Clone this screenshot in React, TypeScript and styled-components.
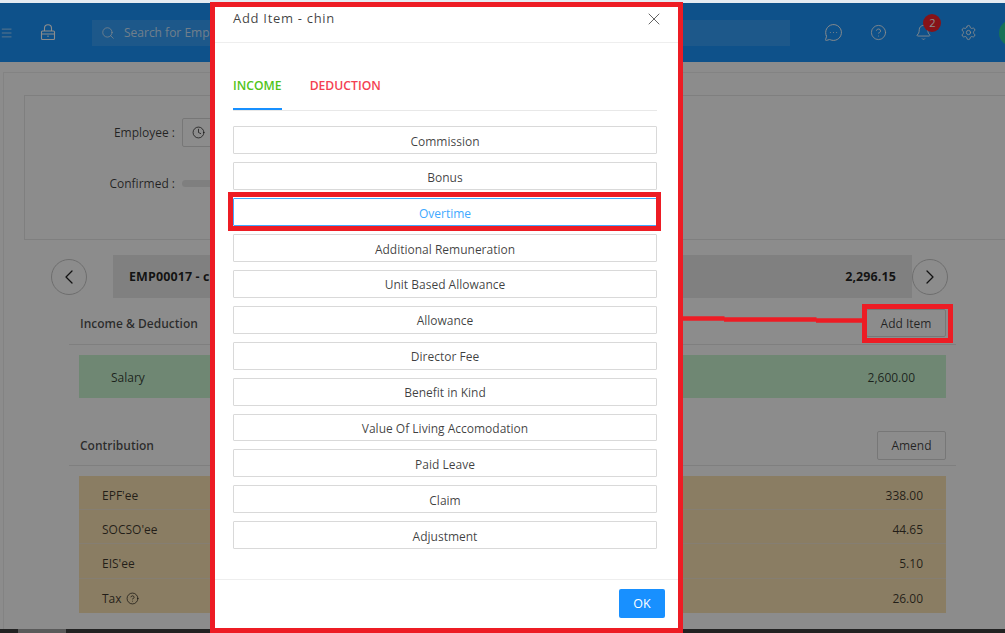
import styled, { createGlobalStyle } from "styled-components";
import {
  Bell,
  ChevronLeft,
  ChevronRight,
  CircleHelp,
  Clock,
  Menu,
  MessageCircleMore,
  Search,
  Settings,
  X,
} from "lucide-react";

const items = [
  "Commission",
  "Bonus",
  "Overtime",
  "Additional Remuneration",
  "Unit Based Allowance",
  "Allowance",
  "Director Fee",
  "Benefit in Kind",
  "Value Of Living Accomodation",
  "Paid Leave",
  "Claim",
  "Adjustment",
];

const contributions = [
  { name: "EPF'ee", value: "338.00" },
  { name: "SOCSO'ee", value: "44.65" },
  { name: "EIS'ee", value: "5.10" },
  { name: "Tax", value: "26.00", help: true },
];

function LockIcon() {
  return (
    <svg width="16" height="17" viewBox="0 0 16 17" fill="none" stroke="currentColor" strokeWidth="1.1">
      <path d="M4.5 7V4.2a3.5 3.5 0 0 1 7 0V7" />
      <rect x="1.5" y="7" width="13" height="8.5" rx="1" />
      <path d="M1.5 10h13M8 11.5v1.5" />
    </svg>
  );
}

function App() {
  return (
    <>
      <GlobalStyle />
      <TopStrip />
      <Stage>
        <Header>
          <MenuSlot>
            <Menu size={20} strokeWidth={1.1} />
          </MenuSlot>
          <LockSlot>
            <LockIcon />
          </LockSlot>
          <SearchBox>
            <Search size={14} strokeWidth={1.5} />
            Search for Employee
          </SearchBox>
          <HeaderIcon>
            <MessageCircleMore size={19} strokeWidth={1.2} />
          </HeaderIcon>
          <HeaderIcon>
            <CircleHelp size={17} strokeWidth={1.2} />
          </HeaderIcon>
          <HeaderIcon>
            <Bell size={17} strokeWidth={1.2} />
            <Badge>2</Badge>
          </HeaderIcon>
          <HeaderIcon>
            <Settings size={17} strokeWidth={1.2} />
          </HeaderIcon>
          <Avatar />
        </Header>

        <Card>
          <FilterPanel>
            <FilterRow>
              <FilterLabel>Employee :</FilterLabel>
              <SelectBox>
                <Clock size={13} strokeWidth={1.6} />
              </SelectBox>
            </FilterRow>
            <FilterRow>
              <FilterLabel>Confirmed :</FilterLabel>
              <ProgressTrack />
            </FilterRow>
          </FilterPanel>

          <NavRow>
            <NavButton>
              <ChevronLeft size={24} strokeWidth={1.3} />
            </NavButton>
            <NavBar>
              <span>EMP00017 - chin</span>
              <span>2,296.15</span>
            </NavBar>
            <NavButton>
              <ChevronRight size={24} strokeWidth={1.3} />
            </NavButton>
          </NavRow>

          <SectionHead>
            <SectionTitle>Income &amp; Deduction</SectionTitle>
            <GhostButton>Add Item</GhostButton>
          </SectionHead>
          <SalaryRow>
            <span>Salary</span>
            <span>2,600.00</span>
          </SalaryRow>

          <SectionHead $spaced>
            <SectionTitle>Contribution</SectionTitle>
            <AmendButton>Amend</AmendButton>
          </SectionHead>
          <ContributionTable>
            {contributions.map((row) => (
              <ContributionRow key={row.name}>
                <RowName>
                  {row.name}
                  {row.help && <CircleHelp size={13} strokeWidth={1.5} />}
                </RowName>
                <span>{row.value}</span>
              </ContributionRow>
            ))}
          </ContributionTable>
        </Card>

        <Backdrop />
      </Stage>
      <BottomBar>
        <ScrollThumb />
      </BottomBar>

      <AddItemFrame />
      <Connector width="190" height="12" viewBox="0 0 190 12" fill="none" stroke="#ed1c24" strokeWidth="4.5">
        <path d="M0 4.5h48.5M48 5.5h92.5M140 6.5h46" />
      </Connector>

      <Modal>
        <ModalHeader>
          <ModalTitle>Add Item - chin</ModalTitle>
          <CloseButton>
            <X size={20} strokeWidth={1.1} />
          </CloseButton>
        </ModalHeader>
        <ModalBody>
          <Tabs>
            <Tab $color="#52c41a" $active>
              INCOME
            </Tab>
            <Tab $color="#f43f52">DEDUCTION</Tab>
          </Tabs>
          <ItemList>
            {items.map((item) => (
              <ItemButton key={item} $selected={item === "Overtime"}>
                {item}
              </ItemButton>
            ))}
          </ItemList>
        </ModalBody>
        <ModalFooter>
          <OkButton>OK</OkButton>
        </ModalFooter>
      </Modal>
    </>
  );
}

export default App;

const GlobalStyle = createGlobalStyle`
  html, body {
    margin: 0;
    height: 633px;
    overflow: hidden;
    background: #fff;
    font-family: "Open Sans", "Noto Sans", sans-serif;
    font-size: 12px;
    color: rgba(0, 0, 0, 0.75);
  }
  * { box-sizing: border-box; }
`;

const TopStrip = styled.div`
  height: 3px;
  background: #e4ebf2;
`;

const Stage = styled.div`
  position: relative;
  height: 626px;
  overflow: hidden;
  background: #fff;
`;

const Backdrop = styled.div`
  position: absolute;
  top: 0;
  left: 0;
  z-index: 3;
  width: 100%;
  height: 100%;
  background-color: rgba(0, 0, 0, 0.45);
`;

const BottomBar = styled.div`
  height: 4px;
  background: #222;
  padding-left: 18px;
`;

const ScrollThumb = styled.div`
  width: 48px;
  height: 4px;
  background: #5a5a5a;
`;

const Header = styled.header`
  display: flex;
  align-items: center;
  height: 59px;
  background: #1a94fc;
  color: #fff;
  overflow: hidden;
`;

const MenuSlot = styled.div`
  display: flex;
  flex: none;
  width: 13.3px;
  justify-content: flex-end;
`;

const LockSlot = styled.div`
  display: flex;
  flex: none;
  margin-left: 27px;
  width: 16px;
`;

const SearchBox = styled.div`
  display: flex;
  flex: none;
  align-items: center;
  gap: 9px;
  margin: 0 21.5px 0 35.7px;
  padding-left: 9px;
  width: 698px;
  height: 26px;
  background: rgba(255, 255, 255, 0.12);
  color: rgba(255, 255, 255, 0.75);
`;

const HeaderIcon = styled.div`
  position: relative;
  display: flex;
  flex: none;
  justify-content: center;
  width: 45px;
`;

const Badge = styled.span`
  position: absolute;
  top: -10px;
  left: 22px;
  width: 18px;
  height: 18px;
  border-radius: 50%;
  background: #f5222d;
  font-size: 11px;
  line-height: 18px;
  text-align: center;
`;

const Avatar = styled.div`
  flex: none;
  margin-left: 7.5px;
  width: 26px;
  height: 26px;
  border-radius: 50%;
  background: #2bcf9f;
`;

const Card = styled.div`
  margin: 10px -10px 0 3px;
  padding: 22px 0 0 20px;
  height: 570px;
  border: 1px solid #eee;
`;

const FilterPanel = styled.div`
  display: flex;
  flex-direction: column;
  gap: 22px;
  padding-top: 22px;
  height: 145px;
  border: 1px solid #e8e8e8;
  border-right-width: 0;
`;

const FilterRow = styled.div`
  display: flex;
  align-items: center;
  gap: 7px;
  height: 29px;
`;

const FilterLabel = styled.div`
  width: 150px;
  text-align: right;
`;

const SelectBox = styled.div`
  display: flex;
  align-items: center;
  padding-left: 9px;
  width: 200px;
  height: 29px;
  border: 1px solid #d9d9d9;
  border-radius: 2px;
`;

const ProgressTrack = styled.div`
  width: 200px;
  height: 7px;
  border-radius: 4px;
  background: #e8e8e8;
`;

const NavRow = styled.div`
  display: flex;
  align-items: center;
  margin: 15px 0 0 27px;
`;

const NavButton = styled.div`
  display: flex;
  flex: none;
  align-items: center;
  justify-content: center;
  width: 36px;
  height: 36px;
  border: 1px solid #c8c8c8;
  border-radius: 50%;
  background: #fff;
  color: #222;
`;

const NavBar = styled.div`
  display: flex;
  flex: none;
  align-items: center;
  justify-content: space-between;
  margin-left: 26px;
  padding: 0 16px;
  width: 799px;
  height: 43px;
  background: #e9e9e9;
  font-size: 12.5px;
  font-weight: 700;
  letter-spacing: 0.1px;
  color: rgba(0, 0, 0, 0.85);
`;

const SectionHead = styled.div<{ $spaced?: boolean }>`
  display: flex;
  align-items: center;
  justify-content: space-between;
  margin: ${(p) => (p.$spaced ? "27px" : "6px")} 0 0 45px;
  padding: 0 10px ${(p) => (p.$spaced ? "0" : "2px")} 11px;
  width: 887px;
  height: 41px;
  border-bottom: 1px solid #e8e8e8;
`;

const SectionTitle = styled.div`
  font-weight: 600;
  color: rgba(0, 0, 0, 0.7);
`;

const GhostButton = styled.div`
  display: flex;
  align-items: center;
  justify-content: center;
  width: 80px;
  height: 28px;
  border: 1px solid #d9d9d9;
  border-radius: 2px;
  background: #fff;
`;

const AmendButton = styled(GhostButton)`
  width: 69px;
  height: 29px;
`;

const SalaryRow = styled.div`
  display: flex;
  align-items: center;
  justify-content: space-between;
  margin: 10px 0 0 55px;
  padding: 2px 31px 0 32px;
  width: 867px;
  height: 43px;
  background: #cbf6d2;
`;

const ContributionTable = styled.div`
  margin: 10px 0 0 55px;
  width: 867px;
  background: #fbe3b4;
`;

const ContributionRow = styled.div`
  display: flex;
  align-items: center;
  justify-content: space-between;
  padding: 5px 23px 0;
  height: 34.2px;
  border-bottom: 1px solid #f2e6cf;

  &:last-child {
    border-bottom: 0;
  }
`;

const RowName = styled.span`
  display: inline-flex;
  align-items: center;
  gap: 4px;
`;

const AddItemFrame = styled.div`
  position: absolute;
  top: 304px;
  left: 862px;
  z-index: 4;
  width: 91px;
  height: 39px;
  border: 5px solid #ed1c24;
`;

const Connector = styled.svg`
  position: absolute;
  top: 314px;
  left: 676px;
  z-index: 4;
`;

const Modal = styled.div`
  position: absolute;
  top: 2px;
  left: 210px;
  z-index: 6;
  display: flex;
  flex-direction: column;
  width: 473px;
  height: 631px;
  border: 5px solid #ed1c24;
  background: #fff;
`;

const ModalHeader = styled.div`
  display: flex;
  flex: none;
  align-items: center;
  justify-content: space-between;
  padding: 0 14px 12px 18px;
  height: 36px;
  border-bottom: 1px solid #eee;
`;

const ModalTitle = styled.div`
  padding-bottom: 2px;
  font-size: 13px;
  font-weight: 500;
  letter-spacing: 0.7px;
  color: rgba(0, 0, 0, 0.75);
`;

const CloseButton = styled.div`
  display: flex;
  color: #555;
`;

const ModalBody = styled.div`
  flex: 1;
  padding: 0 21px 0 18px;
`;

const Tabs = styled.div`
  display: flex;
  gap: 28px;
  padding-top: 31px;
  height: 68px;
  border-bottom: 1px solid #e8e8e8;
`;

const Tab = styled.div<{ $color: string; $active?: boolean }>`
  height: 36px;
  padding-top: 4px;
  line-height: 16px;
  font-size: 12.2px;
  font-weight: 600;
  color: ${(p) => p.$color};
  ${(p) => p.$active && "box-shadow: inset 0 -2px 0 #1890ff;"}
`;

const ItemList = styled.div`
  display: flex;
  flex-direction: column;
  gap: 8px;
  margin-top: 15.4px;
`;

const ItemButton = styled.div<{ $selected?: boolean }>`
  position: relative;
  display: flex;
  flex: none;
  align-items: center;
  justify-content: center;
  padding-top: 2px;
  height: 27.9px;
  border: 1px solid #d9d9d9;
  border-radius: 1px;
  background: #fff;
  color: rgba(0, 0, 0, 0.75);

  ${(p) =>
    p.$selected &&
    `
    border-color: #40a9ff;
    color: #40a9ff;

    &::after {
      content: "";
      position: absolute;
      top: -7px;
      right: -5px;
      bottom: -6px;
      left: -6px;
      border: 5px solid #ed1c24;
    }
  `}
`;

const ModalFooter = styled.div`
  display: flex;
  flex: none;
  justify-content: flex-end;
  padding: 9px 13px 0 0;
  height: 49px;
  border-top: 1px solid #eee;
`;

const OkButton = styled.div`
  display: flex;
  align-items: center;
  justify-content: center;
  width: 46px;
  height: 29px;
  border-radius: 2px;
  background: #1890ff;
  color: #fff;
  font-size: 12.5px;
`;
